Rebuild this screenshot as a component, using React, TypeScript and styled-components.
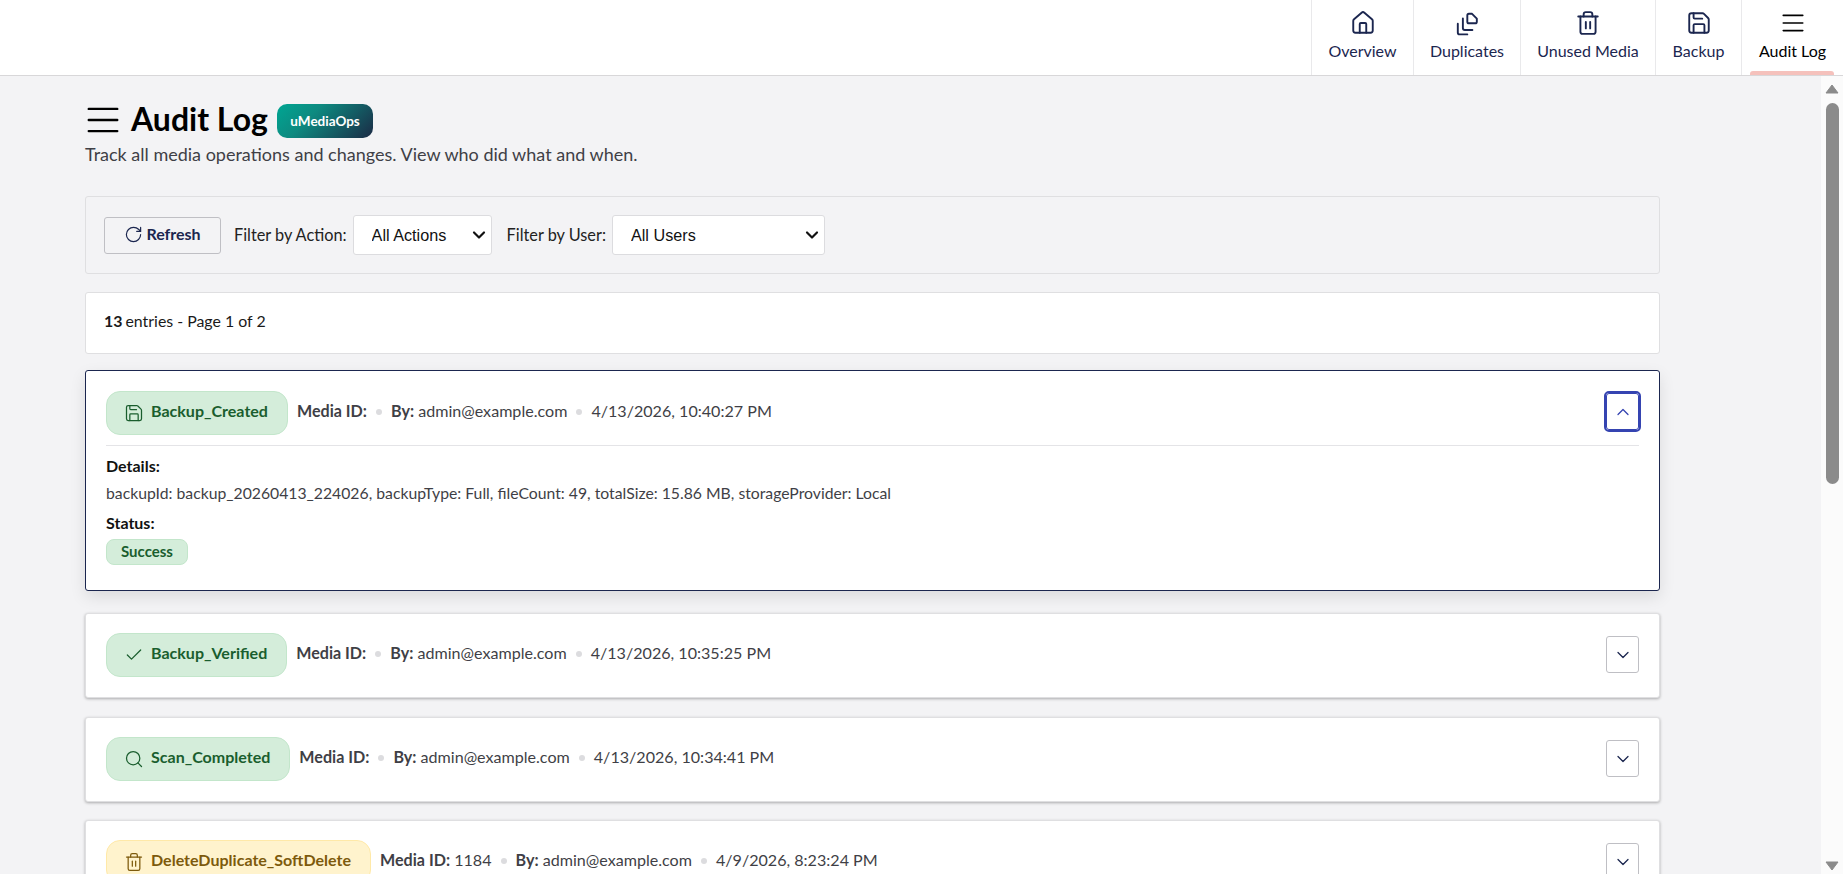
import React from 'react'
import styled, { createGlobalStyle } from 'styled-components'
import { ChevronDown, ChevronUp, Check, House, RotateCw, Save, Search, Trash2 } from 'lucide-react'

const GlobalStyle = createGlobalStyle`
  html, body {
    margin: 0;
    height: 100%;
    overflow: hidden;
    font-family: Lato, "Open Sans", sans-serif;
    color: #1b264f;
    background: #f3f3f5;
  }
`

const Shell = styled.div`
  height: 874px;
  display: flex;
  flex-direction: column;
`

const TopBar = styled.header`
  height: 75px;
  flex: none;
  display: flex;
  justify-content: flex-end;
  background: #fff;
  border-bottom: 1px solid #d8d7d9;
`

const Tab = styled.a<{ $active?: boolean; $width: number }>`
  position: relative;
  width: ${p => p.$width}px;
  box-sizing: border-box;
  display: flex;
  flex-direction: column;
  align-items: center;
  padding-top: 10px;
  gap: 5px;
  font-size: 16px;
  line-height: 20px;
  color: ${p => (p.$active ? '#000' : '#1b264f')};
  border-left: 1px solid #e9e9eb;

  &::after {
    content: '';
    display: ${p => (p.$active ? 'block' : 'none')};
    position: absolute;
    left: 8px;
    right: 9px;
    bottom: 0;
    height: 4px;
    border-radius: 3px 3px 0 0;
    background: #f5c1bc;
  }
`

const Body = styled.div`
  flex: 1;
  min-height: 0;
  display: flex;
`

const Content = styled.main`
  flex: 1;
  min-width: 0;
  overflow: hidden;
  padding: 24px 161px 0 85px;
`

const ScrollTrack = styled.div`
  width: 22px;
  flex: none;
  background: #fbfbfb;
  display: flex;
  flex-direction: column;
  align-items: center;
  padding-top: 8px;
`

const ScrollThumb = styled.div`
  width: 13px;
  height: 381px;
  margin-top: 9px;
  border-radius: 7px;
  background: #8b8b8b;
`

const Spacer = styled.div`
  flex: 1;
`

const TitleRow = styled.div`
  display: flex;
  align-items: center;
  height: 40px;
  color: #000;

  > svg {
    margin-left: -1px;
  }
`

const Title = styled.h1`
  margin: 0 9px 0 9px;
  padding-bottom: 3px;
  font-size: 32px;
  line-height: 37px;
  font-weight: 700;
  color: #000;
`

const Brand = styled.span`
  height: 34px;
  margin-top: 2px;
  padding: 0 13.5px;
  display: inline-flex;
  align-items: center;
  border-radius: 10px;
  font-size: 13.5px;
  font-weight: 700;
  color: #fff;
  background: linear-gradient(135deg, #00a693 0%, #0d8a80 35%, #1b2a45 100%);
`

const Subtitle = styled.p`
  margin: 2px 0 0;
  font-size: 18px;
  line-height: 24px;
  color: #3f3f46;
`

const FilterCard = styled.section`
  margin-top: 30px;
  height: 78px;
  box-sizing: border-box;
  padding: 0 18px;
  display: flex;
  align-items: center;
  background: #f3f3f5;
  border: 1px solid #dfdfe1;
  border-radius: 3px;
`

const RefreshButton = styled.button`
  width: 117px;
  height: 37px;
  display: inline-flex;
  align-items: center;
  justify-content: center;
  gap: 3px;
  font-family: inherit;
  font-size: 16px;
  font-weight: 700;
  color: #1b264f;
  background: #f3f3f5;
  border: 1px solid #bfbfc4;
  border-radius: 3px;
  margin-right: 13px;
  padding: 0 0 3px;

  svg {
    margin-top: 2px;
  }
`

const FilterLabel = styled.label`
  font-size: 16.3px;
  color: #222;
  margin-right: 6px;
  padding-bottom: 2px;
`

const SelectWrap = styled.div<{ $width: number }>`
  position: relative;
  width: ${p => p.$width}px;
  margin-right: 15px;

  svg {
    position: absolute;
    right: 3px;
    top: 10px;
    pointer-events: none;
    color: #111;
  }
`

const Select = styled.select`
  appearance: none;
  width: 100%;
  height: 40px;
  display: block;
  padding: 0 0 0 18px;
  font-family: "Liberation Sans", Arial, sans-serif;
  font-size: 16.2px;
  color: #111;
  background: #fff;
  border: 1px solid #dcdcdf;
  border-radius: 3px;
`

const Summary = styled.section`
  margin-top: 18px;
  height: 62px;
  box-sizing: border-box;
  padding: 0 0 5px 18px;
  display: flex;
  align-items: center;
  gap: 3px;
  font-size: 15.9px;
  color: #1a1a1a;
  background: #fff;
  border: 1px solid #dfdfe1;
  border-radius: 3px;

  b {
    font-weight: 700;
  }
`

const Card = styled.article<{ $open?: boolean; $gap: number }>`
  box-sizing: border-box;
  padding: ${p => (p.$open ? '20px' : '19px')} 20px 0 20px;
  margin-top: ${p => p.$gap}px;
  background: #fff;
  border: 1px solid ${p => (p.$open ? '#1b264f' : '#dfdfe1')};
  border-radius: 3px;
  box-shadow: ${p =>
    p.$open ? '0 6px 16px rgba(0, 0, 0, 0.1)' : '0 1px 3px rgba(0, 0, 0, 0.3)'};
  height: ${p => (p.$open ? '221px' : '85px')};
`

const CardHead = styled.div`
  display: flex;
  align-items: center;
  height: 44px;
`

const Pill = styled.span<{ $tone: 'green' | 'yellow' }>`
  height: 44px;
  box-sizing: border-box;
  padding: 0 19px 5px 17px;
  display: inline-flex;
  align-items: center;
  gap: 7px;
  font-size: 16.05px;
  font-weight: 700;
  border-radius: 14px;
  color: ${p => (p.$tone === 'green' ? '#1a5e2e' : '#7d5a0c')};
  background: ${p => (p.$tone === 'green' ? '#d4edda' : '#fff3cd')};
  border: 1px solid ${p => (p.$tone === 'green' ? '#c3e6cb' : '#ffe9a8')};

  svg {
    margin-top: 5px;
  }
`

const Meta = styled.div`
  margin-left: 9px;
  padding-bottom: 5px;
  display: flex;
  align-items: center;
  font-size: 16.1px;
  color: #3f3f46;
  white-space: pre;

  b {
    font-weight: 700;
  }
`

const Dot = styled.i`
  width: 6px;
  height: 6px;
  margin: 3px 9px 0;
  border-radius: 50%;
  background: #dcdcdf;
`

const ToggleButton = styled.button<{ $open?: boolean }>`
  margin-left: auto;
  margin-bottom: ${p => (p.$open ? '3px' : '1px')};
  width: 33px;
  height: 37px;
  padding: 0;
  display: flex;
  align-items: center;
  justify-content: center;
  background: #fff;
  color: ${p => (p.$open ? '#3544b1' : '#1b264f')};
  border: 1px solid ${p => (p.$open ? '#3544b1' : '#bfbfc4')};
  outline: ${p => (p.$open ? '2px solid #3544b1' : 'none')};
  border-radius: 3px;
`

const Divider = styled.hr`
  margin: 10px 0 9px;
  border: 0;
  border-top: 1px solid #e4e4e7;
`

const DetailLabel = styled.div`
  margin-top: 8px;
  font-size: 16px;
  line-height: 22px;
  font-weight: 700;
  color: #111;
`

const DetailText = styled.div`
  margin-top: 5px;
  font-size: 15.75px;
  line-height: 22px;
  color: #3f3f46;
`

const StatusPill = styled.span`
  display: inline-flex;
  align-items: center;
  height: 26px;
  box-sizing: border-box;
  margin-top: 5px;
  padding: 0 14px 2px;
  font-size: 15px;
  font-weight: 700;
  color: #1a5e2e;
  background: #d4edda;
  border: 1px solid #c3e6cb;
  border-radius: 8px;
`

const Hamburger: React.FC<{ size: number }> = ({ size }) => (
  <svg width={size} height={size} viewBox="0 0 24 24" fill="none" stroke="currentColor" strokeWidth={1.5} strokeLinecap="round">
    <path d="M3 5h18M3 12h18M3 19h18" />
  </svg>
)

const DuplicatesIcon: React.FC<{ size: number }> = ({ size }) => (
  <svg width={size} height={size} viewBox="38 3 82 82" fill="none" stroke="currentColor" strokeWidth={6} strokeLinecap="round" strokeLinejoin="round">
    <path d="M80 20q0-5 5-5h10l15 15v10q0 5-5 5H85q-5 0-5-5z" />
    <path d="M66 30v30q0 6 6 6h24" />
    <path d="M50 46v28q0 6 6 6h24" />
  </svg>
)

const tabIcon = (Icon: React.ElementType) => <Icon size={26} strokeWidth={1.75} />

const tabs = [
  { label: 'Overview', icon: tabIcon(House), width: 102 },
  { label: 'Duplicates', icon: <DuplicatesIcon size={26} />, width: 107 },
  { label: 'Unused Media', icon: tabIcon(Trash2), width: 135 },
  { label: 'Backup', icon: tabIcon(Save), width: 86 },
  { label: 'Audit Log', icon: <Hamburger size={26} />, width: 102, active: true },
]

const entries = [
  { action: 'Backup_Verified', icon: Check, tone: 'green', mediaId: '', time: '4/13/2026, 10:35:25 PM', gap: 22 },
  { action: 'Scan_Completed', icon: Search, tone: 'green', mediaId: '', time: '4/13/2026, 10:34:41 PM', gap: 19 },
  { action: 'DeleteDuplicate_SoftDelete', icon: Trash2, tone: 'yellow', mediaId: '1184', time: '4/9/2026, 8:23:24 PM', gap: 18 },
] as const

const App: React.FC = () => {
  return (
    <Shell>
      <GlobalStyle />
      <TopBar>
        {tabs.map(t => (
          <Tab key={t.label} $active={t.active} $width={t.width}>
            {t.icon}
            {t.label}
          </Tab>
        ))}
      </TopBar>
      <Body>
        <Content>
          <TitleRow>
            <Hamburger size={38} />
            <Title>Audit Log</Title>
            <Brand>uMediaOps</Brand>
          </TitleRow>
          <Subtitle>Track all media operations and changes. View who did what and when.</Subtitle>

          <FilterCard>
            <RefreshButton>
              <RotateCw size={19} strokeWidth={1.5} />
              Refresh
            </RefreshButton>
            <FilterLabel>Filter by Action:</FilterLabel>
            <SelectWrap $width={139}>
              <Select defaultValue="all">
                <option value="all">All Actions</option>
              </Select>
              <ChevronDown size={20} strokeWidth={2.6} />
            </SelectWrap>
            <FilterLabel>Filter by User:</FilterLabel>
            <SelectWrap $width={213}>
              <Select defaultValue="all">
                <option value="all">All Users</option>
              </Select>
              <ChevronDown size={20} strokeWidth={2.6} />
            </SelectWrap>
          </FilterCard>

          <Summary>
            <b>13</b> entries - Page 1 of 2
          </Summary>

          <Card $open $gap={16}>
            <CardHead>
              <Pill $tone="green">
                <Save size={20} strokeWidth={1.5} />
                Backup_Created
              </Pill>
              <Meta>
                <span><b>Media ID:</b></span>
                <Dot />
                <span><b>By:</b> admin@example.com</span>
                <Dot />
                <span>4/13/2026, 10:40:27 PM</span>
              </Meta>
              <ToggleButton $open>
                <ChevronUp size={20} strokeWidth={1.5} />
              </ToggleButton>
            </CardHead>
            <Divider />
            <DetailLabel>Details:</DetailLabel>
            <DetailText>
              backupId: backup_20260413_224026, backupType: Full, fileCount: 49, totalSize: 15.86 MB, storageProvider: Local
            </DetailText>
            <DetailLabel>Status:</DetailLabel>
            <StatusPill>Success</StatusPill>
          </Card>

          {entries.map(e => (
            <Card key={e.action} $gap={e.gap}>
              <CardHead>
                <Pill $tone={e.tone}>
                  <e.icon size={20} strokeWidth={1.5} />
                  {e.action}
                </Pill>
                <Meta>
                  <span><b>Media ID:</b>{e.mediaId && ` ${e.mediaId}`}</span>
                  <Dot />
                  <span><b>By:</b> admin@example.com</span>
                  <Dot />
                  <span>{e.time}</span>
                </Meta>
                <ToggleButton>
                  <ChevronDown size={20} strokeWidth={1.5} />
                </ToggleButton>
              </CardHead>
            </Card>
          ))}
        </Content>
        <ScrollTrack>
          <svg width="14" height="10" viewBox="0 0 14 10">
            <path d="M7 1 L13 9 H1 Z" fill="#8b8b8b" stroke="#8b8b8b" strokeLinejoin="round" />
          </svg>
          <ScrollThumb />
          <Spacer />
          <svg width="14" height="10" viewBox="0 0 14 10" style={{ marginBottom: 3 }}>
            <path d="M7 9 L13 1 H1 Z" fill="#8b8b8b" stroke="#8b8b8b" strokeLinejoin="round" />
          </svg>
        </ScrollTrack>
      </Body>
    </Shell>
  )
}

export default App
